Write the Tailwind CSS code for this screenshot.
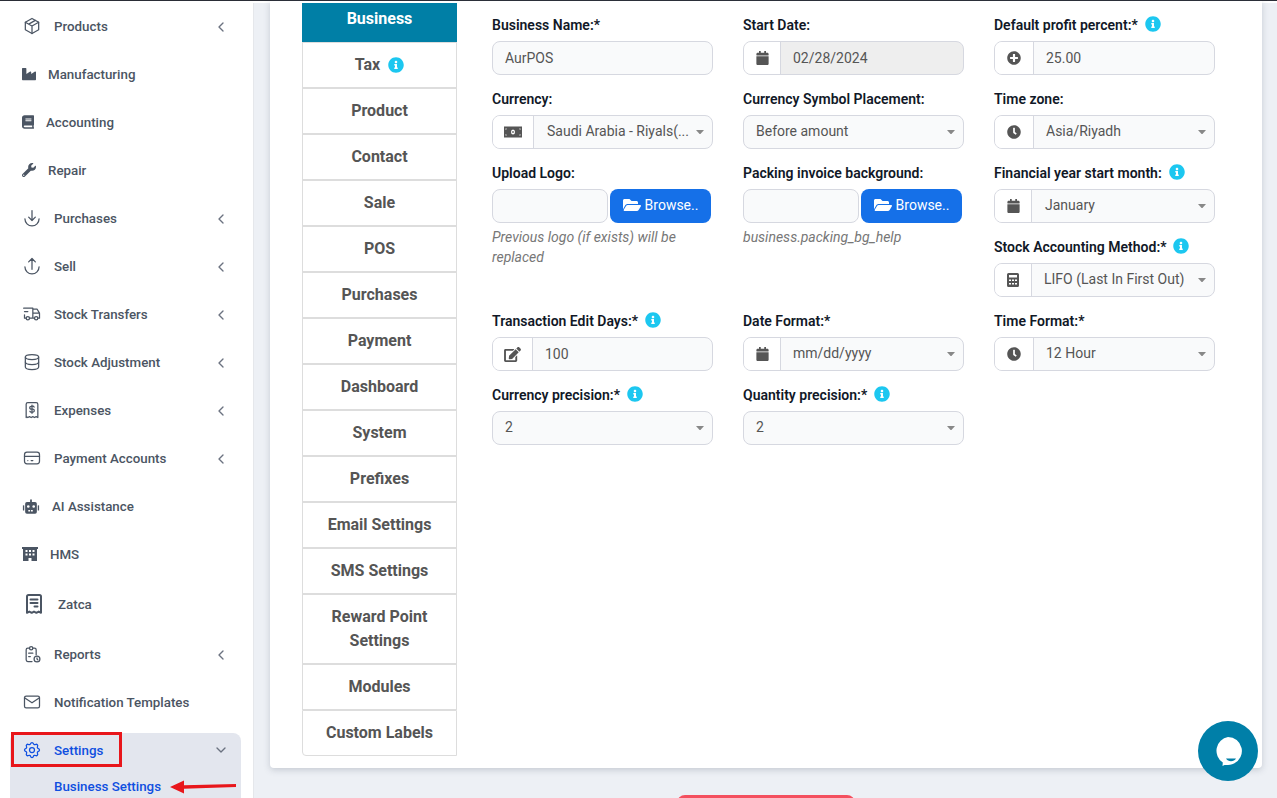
<!DOCTYPE html>
<html lang="en">
<head>
<meta charset="utf-8">
<title>Business Settings</title>
<script src="https://cdn.jsdelivr.net/npm/@tailwindcss/browser@4"></script>
</head>
<body class="font-['Roboto',sans-serif]">
<div class="relative w-[1277px] h-[798px] overflow-hidden bg-white flex flex-col">
  <div class="h-px bg-[#2a2d36] shrink-0"></div>
  <div class="flex flex-1 min-h-0">

    <!-- Sidebar -->
    <aside class="w-[254px] shrink-0 bg-white pt-px text-[13.33px] font-medium text-[#4b5563] border-r border-[#e5e7eb] [&_span]:pt-[2px]">
      <a class="flex items-center h-12 pl-[22px] pr-[24px]">
        <svg class="w-5 h-5 shrink-0" viewBox="0 0 24 24" fill="none" stroke="currentColor" stroke-width="1.5" stroke-linecap="round" stroke-linejoin="round"><path d="M12 3l8 4.500v9l-8 4.500l-8-4.500v-9z"/><path d="M12 12l8-4.500M12 12v9M12 12l-8-4.500M16 5.250l-8 4.500"/></svg>
        <span class="ml-3 flex-1">Products</span>
        <svg class="w-4 h-4 shrink-0 mt-[2px]" viewBox="0 0 24 24" fill="none" stroke="#6b7280" stroke-width="2" stroke-linecap="round" stroke-linejoin="round"><path d="M15 6l-6 6l6 6"/></svg>
      </a>
      <a class="flex items-center h-12 pl-[22px]">
        <svg class="w-[14px] h-[14px] shrink-0" viewBox="0 0 512 512" fill="currentColor"><path d="M475.115 163.781L336 252.309v-68.28c0-18.916-20.931-30.399-36.885-20.248L160 252.309V56c0-13.255-10.745-24-24-24H24C10.745 32 0 42.745 0 56v400c0 13.255 10.745 24 24 24h464c13.255 0 24-10.745 24-24V184.029c0-18.917-20.931-30.399-36.885-20.248z"/></svg>
        <span class="ml-3">Manufacturing</span>
      </a>
      <a class="flex items-center h-12 pl-[22px]">
        <svg class="w-3 h-[14px] shrink-0" viewBox="0 0 448 512" fill="currentColor"><path d="M448 360V24c0-13.3-10.7-24-24-24H96C43 0 0 43 0 96v320c0 53 43 96 96 96h328c13.3 0 24-10.7 24-24v-16c0-7.5-3.5-14.3-8.9-18.7-4.2-15.4-4.2-59.3 0-74.7 5.4-4.3 8.9-11.1 8.9-18.6zM128 134c0-3.3 2.7-6 6-6h212c3.3 0 6 2.7 6 6v20c0 3.3-2.7 6-6 6H134c-3.3 0-6-2.7-6-6v-20zm0 64c0-3.3 2.7-6 6-6h212c3.3 0 6 2.7 6 6v20c0 3.3-2.7 6-6 6H134c-3.3 0-6-2.7-6-6v-20zm253.4 250H96c-17.7 0-32-14.3-32-32 0-17.6 14.4-32 32-32h285.4c-1.9 17.1-1.9 46.9 0 64z"/></svg>
        <span class="ml-3">Accounting</span>
      </a>
      <a class="flex items-center h-12 pl-[22px]">
        <svg class="w-[14px] h-[14px] shrink-0" viewBox="0 0 512 512" fill="currentColor"><path d="M507.73 109.1c-2.24-9.03-13.54-12.09-20.12-5.51l-74.36 74.36-67.88-11.31-11.31-67.88 74.36-74.36c6.62-6.62 3.43-17.9-5.66-20.16-47.38-11.74-99.55.91-136.58 37.93-39.64 39.64-50.55 97.1-34.05 147.2L18.74 402.76c-24.99 24.99-24.99 65.51 0 90.5 24.99 24.99 65.51 24.99 90.5 0l213.21-213.21c50.12 16.71 107.47 5.68 147.37-34.22 37.07-37.07 49.7-89.32 37.91-136.73zM64 472c-13.25 0-24-10.75-24-24 0-13.26 10.75-24 24-24s24 10.74 24 24c0 13.25-10.75 24-24 24z"/></svg>
        <span class="ml-3">Repair</span>
      </a>
      <a class="flex items-center h-12 pl-[22px] pr-[24px]">
        <svg class="w-5 h-5 shrink-0" viewBox="0 0 24 24" fill="none" stroke="currentColor" stroke-width="1.5" stroke-linecap="round" stroke-linejoin="round"><path d="M3.500 13a8.500 8.500 0 0 0 17 0"/><path d="M12 3v12M8 11l4 4l4-4"/></svg>
        <span class="ml-3 flex-1">Purchases</span>
        <svg class="w-4 h-4 shrink-0 mt-[2px]" viewBox="0 0 24 24" fill="none" stroke="#6b7280" stroke-width="2" stroke-linecap="round" stroke-linejoin="round"><path d="M15 6l-6 6l6 6"/></svg>
      </a>
      <a class="flex items-center h-12 pl-[22px] pr-[24px]">
        <svg class="w-5 h-5 shrink-0" viewBox="0 0 24 24" fill="none" stroke="currentColor" stroke-width="1.5" stroke-linecap="round" stroke-linejoin="round"><path d="M3.500 13a8.500 8.500 0 0 0 17 0"/><path d="M12 16V3M8 7l4-4l4 4"/></svg>
        <span class="ml-3 flex-1">Sell</span>
        <svg class="w-4 h-4 shrink-0 mt-[2px]" viewBox="0 0 24 24" fill="none" stroke="#6b7280" stroke-width="2" stroke-linecap="round" stroke-linejoin="round"><path d="M15 6l-6 6l6 6"/></svg>
      </a>
      <a class="flex items-center h-12 pl-[22px] pr-[24px]">
        <svg class="w-5 h-5 shrink-0" viewBox="0 0 24 24" fill="none" stroke="currentColor" stroke-width="1.5" stroke-linecap="round" stroke-linejoin="round"><circle cx="7" cy="17" r="2"/><circle cx="17" cy="17" r="2"/><path d="M5 17H3v-4M2 5h11v12m-4 0h6m4 0h2v-6h-8m0-5h5l3 5M3 9h4"/></svg>
        <span class="ml-3 flex-1">Stock Transfers</span>
        <svg class="w-4 h-4 shrink-0 mt-[2px]" viewBox="0 0 24 24" fill="none" stroke="#6b7280" stroke-width="2" stroke-linecap="round" stroke-linejoin="round"><path d="M15 6l-6 6l6 6"/></svg>
      </a>
      <a class="flex items-center h-12 pl-[22px] pr-[24px]">
        <svg class="w-5 h-5 shrink-0" viewBox="0 0 24 24" fill="none" stroke="currentColor" stroke-width="1.5" stroke-linecap="round" stroke-linejoin="round"><path d="M4 6a8 3 0 1 0 16 0a8 3 0 1 0-16 0"/><path d="M4 6v6a8 3 0 0 0 16 0V6"/><path d="M4 12v6a8 3 0 0 0 16 0v-6"/></svg>
        <span class="ml-3 flex-1">Stock Adjustment</span>
        <svg class="w-4 h-4 shrink-0 mt-[2px]" viewBox="0 0 24 24" fill="none" stroke="#6b7280" stroke-width="2" stroke-linecap="round" stroke-linejoin="round"><path d="M15 6l-6 6l6 6"/></svg>
      </a>
      <a class="flex items-center h-12 pl-[22px] pr-[24px]">
        <svg class="w-5 h-5 shrink-0" viewBox="0 0 24 24" fill="none" stroke="currentColor" stroke-width="1.5" stroke-linecap="round" stroke-linejoin="round"><path d="M5 21V5a2 2 0 0 1 2-2h10a2 2 0 0 1 2 2v16l-2-1l-2 1l-2-1l-2 1l-2-1l-2 1l-2-1z"/><path d="M14.500 8.500a1.500 1.500 0 0 0-1.500-1h-2a1.500 1.500 0 0 0 0 3.500h2a1.500 1.500 0 0 1 0 3.500h-2a1.500 1.500 0 0 1-1.500-1M12 6v10"/></svg>
        <span class="ml-3 flex-1">Expenses</span>
        <svg class="w-4 h-4 shrink-0 mt-[2px]" viewBox="0 0 24 24" fill="none" stroke="#6b7280" stroke-width="2" stroke-linecap="round" stroke-linejoin="round"><path d="M15 6l-6 6l6 6"/></svg>
      </a>
      <a class="flex items-center h-12 pl-[22px] pr-[24px]">
        <svg class="w-5 h-5 shrink-0" viewBox="0 0 24 24" fill="none" stroke="currentColor" stroke-width="1.5" stroke-linecap="round" stroke-linejoin="round"><rect x="3" y="5" width="18" height="14" rx="3"/><path d="M3 10h18M7 15h.01M11 15h2"/></svg>
        <span class="ml-3 flex-1">Payment Accounts</span>
        <svg class="w-4 h-4 shrink-0 mt-[2px]" viewBox="0 0 24 24" fill="none" stroke="#6b7280" stroke-width="2" stroke-linecap="round" stroke-linejoin="round"><path d="M15 6l-6 6l6 6"/></svg>
      </a>
      <a class="flex items-center h-12 pl-[22px]">
        <svg class="w-[18px] h-[15px] shrink-0" viewBox="0 0 640 512" fill="currentColor"><path fill-rule="evenodd" d="M320 0a32 32 0 0 1 32 32v64h112a64 64 0 0 1 64 64v288a64 64 0 0 1-64 64H176a64 64 0 0 1-64-64V160a64 64 0 0 1 64-64h112V32a32 32 0 0 1 32-32zM224 208a48 48 0 1 0 0 96a48 48 0 0 0 0-96zm192 0a48 48 0 1 0 0 96a48 48 0 0 0 0-96zM224 384v48h64v-48zm96 0v48h64v-48z"/><rect x="32" y="208" width="48" height="192" rx="20"/><rect x="560" y="208" width="48" height="192" rx="20"/></svg>
        <span class="ml-3">AI Assistance</span>
      </a>
      <a class="flex items-center h-12 pl-[22px]">
        <svg class="w-4 h-[14px] shrink-0" viewBox="0 0 16 14" fill="currentColor"><path fill-rule="evenodd" d="M0 0h16v2h-1v12H9.500v-3h-3v3H1V2H0zM3.500 3v2h2V3zm3.500 0v2h2V3zm3.500 0v2h2V3zM3.500 6.500v2h2v-2zm3.500 0v2h2v-2zm3.500 0v2h2v-2z"/></svg>
        <span class="ml-3">HMS</span>
      </a>
      <a class="flex items-center h-[52px] pl-[26px]">
        <svg class="w-4 h-5 shrink-0" viewBox="0 0 16 20" fill="none" stroke="currentColor" stroke-width="2" stroke-linecap="round" stroke-linejoin="round"><path d="M1 18.800V2.500A1.500 1.500 0 0 1 2.500 1h11A1.500 1.500 0 0 1 15 2.500v16.300l-2.300-1.200l-2.300 1.200L8 17.600l-2.300 1.200l-2.400-1.200z"/><path d="M4.500 5.500h7M4.500 9h7M8.500 12.500h3"/></svg>
        <span class="ml-4">Zatca</span>
      </a>
      <a class="flex items-center h-12 pl-[22px] pr-[24px]">
        <svg class="w-5 h-5 shrink-0" viewBox="0 0 24 24" fill="none" stroke="currentColor" stroke-width="1.5" stroke-linecap="round" stroke-linejoin="round"><path d="M9 5H7a2 2 0 0 0-2 2v12a2 2 0 0 0 2 2h5M17 13V7a2 2 0 0 0-2-2h-2"/><rect x="9" y="3" width="4" height="4" rx="2"/><path d="M8 11h5M8 15h2"/><circle cx="18" cy="18" r="3.500"/><path d="M18 16.500V18l1 1"/></svg>
        <span class="ml-3 flex-1">Reports</span>
        <svg class="w-4 h-4 shrink-0 mt-[2px]" viewBox="0 0 24 24" fill="none" stroke="#6b7280" stroke-width="2" stroke-linecap="round" stroke-linejoin="round"><path d="M15 6l-6 6l6 6"/></svg>
      </a>
      <a class="flex items-center h-12 pl-[22px]">
        <svg class="w-5 h-5 shrink-0" viewBox="0 0 24 24" fill="none" stroke="currentColor" stroke-width="1.5" stroke-linecap="round" stroke-linejoin="round"><rect x="3" y="5" width="18" height="14" rx="2"/><path d="M3 7l9 6l9-6"/></svg>
        <span class="ml-3">Notification Templates</span>
      </a>
      <div class="ml-[10px] mr-3 mt-[7px] bg-[#e3e6ee] rounded-t-lg pl-3 pr-3 text-[#0f4fe0]">
        <a class="flex items-center h-[34px]">
          <svg class="w-5 h-5 shrink-0" viewBox="0 0 24 24" fill="none" stroke="currentColor" stroke-width="1.5" stroke-linecap="round" stroke-linejoin="round"><path d="M10.325 4.317c.426-1.756 2.924-1.756 3.35 0a1.724 1.724 0 0 0 2.573 1.066c1.543-.94 3.31.826 2.37 2.37a1.724 1.724 0 0 0 1.065 2.572c1.756.426 1.756 2.924 0 3.35a1.724 1.724 0 0 0-1.066 2.573c.94 1.543-.826 3.31-2.37 2.37a1.724 1.724 0 0 0-2.572 1.065c-.426 1.756-2.924 1.756-3.35 0a1.724 1.724 0 0 0-2.573-1.066c-1.543.94-3.31-.826-2.37-2.370a1.724 1.724 0 0 0-1.065-2.572c-1.756-.426-1.756-2.924 0-3.350a1.724 1.724 0 0 0 1.066-2.573c-.94-1.543.826-3.310 2.370-2.370c1 .608 2.296.07 2.572-1.065z"/><circle cx="12" cy="12" r="3"/></svg>
          <span class="ml-3 flex-1">Settings</span>
          <svg class="w-4 h-4 shrink-0" viewBox="0 0 24 24" fill="none" stroke="#6b7280" stroke-width="2" stroke-linecap="round" stroke-linejoin="round"><path d="M6 9l6 6l6-6"/></svg>
        </a>
        <a class="block pl-8 pt-[11px] h-[31px] leading-[18px]">Business Settings</a>
      </div>
    </aside>

    <!-- Main -->
    <main class="flex-1 min-w-0 flex flex-col bg-[#edf0f5]">
      <div class="h-[2px] bg-white shrink-0 ml-[-1px]"></div>
      <div class="ml-4 mr-[15px] h-[767px] shrink-0 bg-white rounded-b-[4px] shadow-[0_2px_6px_rgba(80,90,110,0.25)] flex pl-8 -mt-[2px]">

        <!-- Tabs -->
        <nav class="w-[155px] shrink-0 mt-[2px] text-base font-bold text-[#555] text-center leading-6">
          <a class="flex justify-center items-start pt-[4px] h-[39px] bg-[#007fa6] text-white">Business</a>
          <a class="flex items-center justify-center gap-2 h-[46px] border border-[#ddd]">Tax
            <svg class="w-4 h-4" viewBox="0 0 512 512" fill="#1cc7f0"><path d="M256 8C119.043 8 8 119.083 8 256c0 136.997 111.043 248 248 248s248-111.003 248-248C504 119.083 392.957 8 256 8zm0 110c23.196 0 42 18.804 42 42s-18.804 42-42 42-42-18.804-42-42 18.804-42 42-42zm56 254c0 6.627-5.373 12-12 12h-88c-6.627 0-12-5.373-12-12v-24c0-6.627 5.373-12 12-12h12v-64h-12c-6.627 0-12-5.373-12-12v-24c0-6.627 5.373-12 12-12h64c6.627 0 12 5.373 12 12v100h12c6.627 0 12 5.373 12 12v24z"/></svg>
          </a>
          <a class="flex items-center justify-center h-[46px] border border-[#ddd]">Product</a>
          <a class="flex items-center justify-center h-[46px] border border-[#ddd]">Contact</a>
          <a class="flex items-center justify-center h-[46px] border border-[#ddd]">Sale</a>
          <a class="flex items-center justify-center h-[46px] border border-[#ddd]">POS</a>
          <a class="flex items-center justify-center h-[46px] border border-[#ddd]">Purchases</a>
          <a class="flex items-center justify-center h-[46px] border border-[#ddd]">Payment</a>
          <a class="flex items-center justify-center h-[46px] border border-[#ddd]">Dashboard</a>
          <a class="flex items-center justify-center h-[46px] border border-[#ddd]">System</a>
          <a class="flex items-center justify-center h-[46px] border border-[#ddd]">Prefixes</a>
          <a class="flex items-center justify-center h-[46px] border border-[#ddd]">Email Settings</a>
          <a class="flex items-center justify-center h-[46px] border border-[#ddd]">SMS Settings</a>
          <a class="flex items-center justify-center h-[70px] border border-[#ddd] px-6">Reward Point Settings</a>
          <a class="flex items-center justify-center h-[46px] border border-[#ddd]">Modules</a>
          <a class="flex items-center justify-center h-[46px] border border-[#ddd] rounded-bl-[4px]">Custom Labels</a>
        </nav>

        <!-- Form -->
        <div class="flex gap-[30px] ml-[35px] pt-4 text-sm text-[#555]">

          <!-- Column 1 -->
          <div class="w-[221px] flex flex-col gap-4">
            <div>
              <label class="block h-4 leading-4 mb-2 font-semibold text-[#111827]">Business Name:*</label>
              <div class="h-[34px] flex items-center px-[12px] rounded-lg border border-[#d6d8e0] bg-[#f9fafb]">AurPOS</div>
            </div>
            <div>
              <label class="block h-4 leading-4 mb-2 font-semibold text-[#111827]">Currency:</label>
              <div class="h-[34px] flex rounded-lg border border-[#d6d8e0] bg-[#f9fafb] overflow-hidden">
                <span class="w-[41px] shrink-0 flex items-center justify-center bg-white border-r border-[#d6d8e0]">
                  <svg class="w-[18px] h-3" viewBox="0 0 18 12" fill="#555"><path fill-rule="evenodd" d="M0 .5h18v11H0zM9 3.500a2 2.500 0 1 0 0 5a2 2.500 0 0 0 0-5zM9 5a.8 1 0 1 1 0 2a.8 1 0 0 1 0-2zM1.500 2.500v1.200A1.200 1.200 0 0 0 2.700 2.500zm13.800 0A1.200 1.200 0 0 0 16.500 3.700V2.500zM1.500 8.300v1.200h1.200A1.200 1.200 0 0 0 1.500 8.300zM16.500 8.300A1.200 1.200 0 0 0 15.300 9.500h1.200z"/></svg>
                </span>
                <span class="flex-1 min-w-0 flex items-center pl-[13px] pr-[8px]">
                  <span class="flex-1 whitespace-nowrap pb-[2px]">Saudi Arabia - Riyals(...</span>
                  <svg class="w-2 h-1 shrink-0" viewBox="0 0 8 4" fill="#888"><path d="M0 0h8L4 4.500z"/></svg>
                </span>
              </div>
            </div>
            <div class="h-[132px]">
              <label class="block h-4 leading-4 mb-2 font-semibold text-[#111827]">Upload Logo:</label>
              <div class="h-[34px] flex gap-[2px]">
                <div class="w-[116px] rounded-lg border border-[#d6d8e0] bg-[#f9fafb]"></div>
                <div class="w-[101px] rounded-lg bg-[#1570e8] text-white flex items-center justify-center gap-[4px] pb-[2px]">
                  <svg class="w-[18px] h-4" viewBox="0 0 576 512" fill="currentColor"><path d="M572.694 292.093L500.27 416.248A63.997 63.997 0 0 1 444.989 448H45.025c-18.523 0-30.064-20.093-20.731-36.093l72.424-124.155A64 64 0 0 1 152 256h399.964c18.523 0 30.064 20.093 20.73 36.093zM152 224h328v-48c0-26.51-21.49-48-48-48H272l-64-64H48C21.49 64 0 85.49 0 112v278.046l69.077-118.418C86.214 242.25 117.989 224 152 224z"/></svg>
                  Browse..
                </div>
              </div>
              <p class="mt-[4px] italic text-[#777] leading-5">Previous logo (if exists) will be replaced</p>
            </div>
            <div>
              <label class="flex items-center gap-[7px] h-4 leading-4 mb-2 font-semibold text-[#111827]">Transaction Edit Days:*
                <svg class="w-4 h-4 -mt-[2px]" viewBox="0 0 512 512" fill="#1cc7f0"><path d="M256 8C119.043 8 8 119.083 8 256c0 136.997 111.043 248 248 248s248-111.003 248-248C504 119.083 392.957 8 256 8zm0 110c23.196 0 42 18.804 42 42s-18.804 42-42 42-42-18.804-42-42 18.804-42 42-42zm56 254c0 6.627-5.373 12-12 12h-88c-6.627 0-12-5.373-12-12v-24c0-6.627 5.373-12 12-12h12v-64h-12c-6.627 0-12-5.373-12-12v-24c0-6.627 5.373-12 12-12h64c6.627 0 12 5.373 12 12v100h12c6.627 0 12 5.373 12 12v24z"/></svg>
              </label>
              <div class="h-[34px] flex rounded-lg border border-[#d6d8e0] bg-[#f9fafb] overflow-hidden">
                <span class="w-[40px] shrink-0 flex items-center justify-center bg-white border-r border-[#d6d8e0]">
                  <svg class="w-[17px] h-[15px]" viewBox="0 0 576 512" fill="#555"><path d="M402.6 83.2l90.2 90.2c3.8 3.8 3.8 10 0 13.8L274.4 405.6l-92.8 10.3c-12.4 1.4-22.9-9.1-21.5-21.5l10.3-92.8L388.8 83.2c3.8-3.8 10-3.8 13.8 0zm162-22.9l-48.8-48.8c-15.2-15.2-39.9-15.2-55.2 0l-35.4 35.4c-3.8 3.8-3.8 10 0 13.8l90.2 90.2c3.8 3.8 10 3.8 13.8 0l35.400-35.400c15.200-15.300 15.200-40 0-55.200zM384 346.200V448H64V128h229.800c3.200 0 6.200-1.300 8.500-3.500l40-40c7.600-7.600 2.200-20.500-8.500-20.500H48C21.500 64 0 85.500 0 112v352c0 26.500 21.500 48 48 48h352c26.500 0 48-21.500 48-48V306.200c0-10.700-12.900-16-20.500-8.500l-40 40c-2.200 2.300-3.500 5.300-3.500 8.500z"/></svg>
                </span>
                <span class="flex-1 flex items-center pl-[12px]">100</span>
              </div>
            </div>
            <div>
              <label class="flex items-center gap-[7px] h-4 leading-4 mb-2 font-semibold text-[#111827]">Currency precision:*
                <svg class="w-4 h-4 -mt-[2px]" viewBox="0 0 512 512" fill="#1cc7f0"><path d="M256 8C119.043 8 8 119.083 8 256c0 136.997 111.043 248 248 248s248-111.003 248-248C504 119.083 392.957 8 256 8zm0 110c23.196 0 42 18.804 42 42s-18.804 42-42 42-42-18.804-42-42 18.804-42 42-42zm56 254c0 6.627-5.373 12-12 12h-88c-6.627 0-12-5.373-12-12v-24c0-6.627 5.373-12 12-12h12v-64h-12c-6.627 0-12-5.373-12-12v-24c0-6.627 5.373-12 12-12h64c6.627 0 12 5.373 12 12v100h12c6.627 0 12 5.373 12 12v24z"/></svg>
              </label>
              <div class="h-[34px] flex items-center pl-[12px] pr-[8px] rounded-lg border border-[#d6d8e0] bg-[#f9fafb]">
                <span class="flex-1 pb-[2px]">2</span>
                <svg class="w-2 h-1 shrink-0" viewBox="0 0 8 4" fill="#888"><path d="M0 0h8L4 4.500z"/></svg>
              </div>
            </div>
          </div>

          <!-- Column 2 -->
          <div class="w-[221px] flex flex-col gap-4">
            <div>
              <label class="block h-4 leading-4 mb-2 font-semibold text-[#111827]">Start Date:</label>
              <div class="h-[34px] flex rounded-lg border border-[#d6d8e0] bg-[#eeeeee] overflow-hidden">
                <span class="w-[37px] shrink-0 flex items-center justify-center bg-white border-r border-[#d6d8e0]">
                  <svg class="w-[13px] h-[14px]" viewBox="0 0 448 512" fill="#555"><path d="M12 192h424c6.600 0 12 5.400 12 12v260c0 26.500-21.500 48-48 48H48c-26.500 0-48-21.500-48-48V204c0-6.600 5.400-12 12-12zm436-44v-36c0-26.500-21.500-48-48-48h-48V12c0-6.600-5.400-12-12-12h-40c-6.600 0-12 5.400-12 12v52H160V12c0-6.600-5.400-12-12-12h-40c-6.600 0-12 5.400-12 12v52H48C21.500 64 0 85.500 0 112v36c0 6.600 5.400 12 12 12h424c6.600 0 12-5.400 12-12z"/></svg>
                </span>
                <span class="flex-1 flex items-center pl-[12px]">02/28/2024</span>
              </div>
            </div>
            <div>
              <label class="block h-4 leading-4 mb-2 font-semibold text-[#111827]">Currency Symbol Placement:</label>
              <div class="h-[34px] flex items-center pl-[12px] pr-[8px] rounded-lg border border-[#d6d8e0] bg-[#f9fafb]">
                <span class="flex-1 pb-[2px]">Before amount</span>
                <svg class="w-2 h-1 shrink-0" viewBox="0 0 8 4" fill="#888"><path d="M0 0h8L4 4.500z"/></svg>
              </div>
            </div>
            <div class="h-[132px]">
              <label class="block h-4 leading-4 mb-2 font-semibold text-[#111827]">Packing invoice background:</label>
              <div class="h-[34px] flex gap-[2px]">
                <div class="w-[116px] rounded-lg border border-[#d6d8e0] bg-[#f9fafb]"></div>
                <div class="w-[101px] rounded-lg bg-[#1570e8] text-white flex items-center justify-center gap-[4px] pb-[2px]">
                  <svg class="w-[18px] h-4" viewBox="0 0 576 512" fill="currentColor"><path d="M572.694 292.093L500.27 416.248A63.997 63.997 0 0 1 444.989 448H45.025c-18.523 0-30.064-20.093-20.731-36.093l72.424-124.155A64 64 0 0 1 152 256h399.964c18.523 0 30.064 20.093 20.730 36.093zM152 224h328v-48c0-26.510-21.490-48-48-48H272l-64-64H48C21.490 64 0 85.490 0 112v278.046l69.077-118.418C86.214 242.250 117.989 224 152 224z"/></svg>
                  Browse..
                </div>
              </div>
              <p class="mt-[4px] italic text-[#777] leading-5">business.packing_bg_help</p>
            </div>
            <div>
              <label class="block h-4 leading-4 mb-2 font-semibold text-[#111827]">Date Format:*</label>
              <div class="h-[34px] flex rounded-lg border border-[#d6d8e0] bg-[#f9fafb] overflow-hidden">
                <span class="w-[37px] shrink-0 flex items-center justify-center bg-white border-r border-[#d6d8e0]">
                  <svg class="w-[13px] h-[14px]" viewBox="0 0 448 512" fill="#555"><path d="M12 192h424c6.600 0 12 5.400 12 12v260c0 26.500-21.500 48-48 48H48c-26.500 0-48-21.500-48-48V204c0-6.600 5.400-12 12-12zm436-44v-36c0-26.500-21.500-48-48-48h-48V12c0-6.600-5.400-12-12-12h-40c-6.600 0-12 5.400-12 12v52H160V12c0-6.600-5.400-12-12-12h-40c-6.600 0-12 5.400-12 12v52H48C21.500 64 0 85.500 0 112v36c0 6.600 5.400 12 12 12h424c6.600 0 12-5.400 12-12z"/></svg>
                </span>
                <span class="flex-1 flex items-center pl-[12px] pr-[8px]">
                  <span class="flex-1 pb-[2px]">mm/dd/yyyy</span>
                  <svg class="w-2 h-1 shrink-0" viewBox="0 0 8 4" fill="#888"><path d="M0 0h8L4 4.500z"/></svg>
                </span>
              </div>
            </div>
            <div>
              <label class="flex items-center gap-[7px] h-4 leading-4 mb-2 font-semibold text-[#111827]">Quantity precision:*
                <svg class="w-4 h-4 -mt-[2px]" viewBox="0 0 512 512" fill="#1cc7f0"><path d="M256 8C119.043 8 8 119.083 8 256c0 136.997 111.043 248 248 248s248-111.003 248-248C504 119.083 392.957 8 256 8zm0 110c23.196 0 42 18.804 42 42s-18.804 42-42 42-42-18.804-42-42 18.804-42 42-42zm56 254c0 6.627-5.373 12-12 12h-88c-6.627 0-12-5.373-12-12v-24c0-6.627 5.373-12 12-12h12v-64h-12c-6.627 0-12-5.373-12-12v-24c0-6.627 5.373-12 12-12h64c6.627 0 12 5.373 12 12v100h12c6.627 0 12 5.373 12 12v24z"/></svg>
              </label>
              <div class="h-[34px] flex items-center pl-[12px] pr-[8px] rounded-lg border border-[#d6d8e0] bg-[#f9fafb]">
                <span class="flex-1 pb-[2px]">2</span>
                <svg class="w-2 h-1 shrink-0" viewBox="0 0 8 4" fill="#888"><path d="M0 0h8L4 4.500z"/></svg>
              </div>
            </div>
          </div>

          <!-- Column 3 -->
          <div class="w-[221px] flex flex-col gap-4">
            <div>
              <label class="flex items-center gap-[7px] h-4 leading-4 mb-2 font-semibold text-[#111827]">Default profit percent:*
                <svg class="w-4 h-4 -mt-[2px]" viewBox="0 0 512 512" fill="#1cc7f0"><path d="M256 8C119.043 8 8 119.083 8 256c0 136.997 111.043 248 248 248s248-111.003 248-248C504 119.083 392.957 8 256 8zm0 110c23.196 0 42 18.804 42 42s-18.804 42-42 42-42-18.804-42-42 18.804-42 42-42zm56 254c0 6.627-5.373 12-12 12h-88c-6.627 0-12-5.373-12-12v-24c0-6.627 5.373-12 12-12h12v-64h-12c-6.627 0-12-5.373-12-12v-24c0-6.627 5.373-12 12-12h64c6.627 0 12 5.373 12 12v100h12c6.627 0 12 5.373 12 12v24z"/></svg>
              </label>
              <div class="h-[34px] flex rounded-lg border border-[#d6d8e0] bg-[#f9fafb] overflow-hidden">
                <span class="w-[39px] shrink-0 flex items-center justify-center bg-white border-r border-[#d6d8e0]">
                  <svg class="w-[14px] h-[14px]" viewBox="0 0 512 512" fill="#555"><path d="M256 8C119 8 8 119 8 256s111 248 248 248 248-111 248-248S393 8 256 8zm144 276c0 6.600-5.400 12-12 12h-92v92c0 6.600-5.400 12-12 12h-56c-6.600 0-12-5.400-12-12v-92h-92c-6.600 0-12-5.400-12-12v-56c0-6.600 5.400-12 12-12h92v-92c0-6.600 5.400-12 12-12h56c6.600 0 12 5.400 12 12v92h92c6.600 0 12 5.400 12 12v56z"/></svg>
                </span>
                <span class="flex-1 flex items-center pl-[12px]">25.00</span>
              </div>
            </div>
            <div>
              <label class="block h-4 leading-4 mb-2 font-semibold text-[#111827]">Time zone:</label>
              <div class="h-[34px] flex rounded-lg border border-[#d6d8e0] bg-[#f9fafb] overflow-hidden">
                <span class="w-[39px] shrink-0 flex items-center justify-center bg-white border-r border-[#d6d8e0]">
                  <svg class="w-[14px] h-[14px]" viewBox="0 0 512 512" fill="#555"><path d="M256,8C119,8,8,119,8,256S119,504,256,504,504,393,504,256,393,8,256,8Zm92.49,313h0l-20,25a16,16,0,0,1-22.49,2.5h0l-67-49.72a40,40,0,0,1-15-31.23V112a16,16,0,0,1,16-16h32a16,16,0,0,1,16,16V256l58,42.5A16,16,0,0,1,348.49,321Z"/></svg>
                </span>
                <span class="flex-1 flex items-center pl-[12px] pr-[8px]">
                  <span class="flex-1 pb-[2px]">Asia/Riyadh</span>
                  <svg class="w-2 h-1 shrink-0" viewBox="0 0 8 4" fill="#888"><path d="M0 0h8L4 4.500z"/></svg>
                </span>
              </div>
            </div>
            <div>
              <label class="flex items-center gap-[7px] h-4 leading-4 mb-2 font-semibold text-[#111827]">Financial year start month:
                <svg class="w-4 h-4 -mt-[2px]" viewBox="0 0 512 512" fill="#1cc7f0"><path d="M256 8C119.043 8 8 119.083 8 256c0 136.997 111.043 248 248 248s248-111.003 248-248C504 119.083 392.957 8 256 8zm0 110c23.196 0 42 18.804 42 42s-18.804 42-42 42-42-18.804-42-42 18.804-42 42-42zm56 254c0 6.627-5.373 12-12 12h-88c-6.627 0-12-5.373-12-12v-24c0-6.627 5.373-12 12-12h12v-64h-12c-6.627 0-12-5.373-12-12v-24c0-6.627 5.373-12 12-12h64c6.627 0 12 5.373 12 12v100h12c6.627 0 12 5.373 12 12v24z"/></svg>
              </label>
              <div class="h-[34px] flex rounded-lg border border-[#d6d8e0] bg-[#f9fafb] overflow-hidden">
                <span class="w-[37px] shrink-0 flex items-center justify-center bg-white border-r border-[#d6d8e0]">
                  <svg class="w-[13px] h-[14px]" viewBox="0 0 448 512" fill="#555"><path d="M12 192h424c6.600 0 12 5.400 12 12v260c0 26.500-21.500 48-48 48H48c-26.500 0-48-21.500-48-48V204c0-6.600 5.400-12 12-12zm436-44v-36c0-26.500-21.500-48-48-48h-48V12c0-6.600-5.400-12-12-12h-40c-6.600 0-12 5.400-12 12v52H160V12c0-6.600-5.400-12-12-12h-40c-6.600 0-12 5.400-12 12v52H48C21.500 64 0 85.500 0 112v36c0 6.600 5.400 12 12 12h424c6.600 0 12-5.400 12-12z"/></svg>
                </span>
                <span class="flex-1 flex items-center pl-[13px] pr-[8px]">
                  <span class="flex-1 pb-[2px]">January</span>
                  <svg class="w-2 h-1 shrink-0" viewBox="0 0 8 4" fill="#888"><path d="M0 0h8L4 4.500z"/></svg>
                </span>
              </div>
            </div>
            <div>
              <label class="flex items-center gap-[7px] h-4 leading-4 mb-2 font-semibold text-[#111827]">Stock Accounting Method:*
                <svg class="w-4 h-4 -mt-[2px]" viewBox="0 0 512 512" fill="#1cc7f0"><path d="M256 8C119.043 8 8 119.083 8 256c0 136.997 111.043 248 248 248s248-111.003 248-248C504 119.083 392.957 8 256 8zm0 110c23.196 0 42 18.804 42 42s-18.804 42-42 42-42-18.804-42-42 18.804-42 42-42zm56 254c0 6.627-5.373 12-12 12h-88c-6.627 0-12-5.373-12-12v-24c0-6.627 5.373-12 12-12h12v-64h-12c-6.627 0-12-5.373-12-12v-24c0-6.627 5.373-12 12-12h64c6.627 0 12 5.373 12 12v100h12c6.627 0 12 5.373 12 12v24z"/></svg>
              </label>
              <div class="h-[34px] flex rounded-lg border border-[#d6d8e0] bg-[#f9fafb] overflow-hidden">
                <span class="w-[37px] shrink-0 flex items-center justify-center bg-white border-r border-[#d6d8e0]">
                  <svg class="w-3 h-[14px]" viewBox="0 0 12 14" fill="#555"><path fill-rule="evenodd" d="M1.500 0h9A1.500 1.500 0 0 1 12 1.500v11a1.500 1.500 0 0 1-1.500 1.500h-9A1.500 1.500 0 0 1 0 12.500v-11A1.500 1.500 0 0 1 1.500 0zM2 2v2.500h8V2zM2 6.500V8h2V6.500zm3 0V8h2V6.500zm3 0V8h2V6.500zM2 10v1.500h2V10zm3 0v1.500h2V10zm3 0v1.500h2V10z"/></svg>
                </span>
                <span class="flex-1 flex items-center pl-[12px] pr-[8px]">
                  <span class="flex-1 whitespace-nowrap pb-[2px]">LIFO (Last In First Out)</span>
                  <svg class="w-2 h-1 shrink-0" viewBox="0 0 8 4" fill="#888"><path d="M0 0h8L4 4.500z"/></svg>
                </span>
              </div>
            </div>
            <div>
              <label class="block h-4 leading-4 mb-2 font-semibold text-[#111827]">Time Format:*</label>
              <div class="h-[34px] flex rounded-lg border border-[#d6d8e0] bg-[#f9fafb] overflow-hidden">
                <span class="w-[39px] shrink-0 flex items-center justify-center bg-white border-r border-[#d6d8e0]">
                  <svg class="w-[14px] h-[14px]" viewBox="0 0 512 512" fill="#555"><path d="M256,8C119,8,8,119,8,256S119,504,256,504,504,393,504,256,393,8,256,8Zm92.49,313h0l-20,25a16,16,0,0,1-22.49,2.5h0l-67-49.72a40,40,0,0,1-15-31.23V112a16,16,0,0,1,16-16h32a16,16,0,0,1,16,16V256l58,42.5A16,16,0,0,1,348.49,321Z"/></svg>
                </span>
                <span class="flex-1 flex items-center pl-[12px] pr-[8px]">
                  <span class="flex-1 pb-[2px]">12 Hour</span>
                  <svg class="w-2 h-1 shrink-0" viewBox="0 0 8 4" fill="#888"><path d="M0 0h8L4 4.500z"/></svg>
                </span>
              </div>
            </div>
          </div>
        </div>
      </div>

      <!-- Save button peeking in at the fold -->
      <div class="flex justify-center mt-[27px]">
        <div class="w-[178px] h-10 rounded-lg bg-[#f4505f]"></div>
      </div>
    </main>
  </div>

  <!-- Annotations -->
  <div class="absolute left-[11px] top-[732px] w-[111px] h-[35px] border-[3px] border-[#e8161b]"></div>
  <svg class="absolute left-[168px] top-[778px] w-[70px] h-[18px]" viewBox="0 0 70 18" fill="#e8161b"><path d="M2 9L16 2.500v4.700L68 6v3L16 10.700V15.500z"/></svg>

  <!-- Chat widget -->
  <div class="absolute left-[1198px] top-[721px] w-[60px] h-[60px] rounded-full bg-[#007fa8] flex items-center justify-center">
    <svg class="w-[30px] h-[32px]" viewBox="0 0 30 32"><path fill="#fff" d="M15 2a14 14 0 0 1 6 26.600c-3 1.400-7 1.600-9.500 1.400L9.500 31l.3-3.500A14 14 0 0 1 15 2z"/><path fill="#007fa8" d="M13 23.500h10c-1 1.800-3 2.700-5 2.700s-4-.9-5-2.700z"/></svg>
  </div>
</div>
</body>
</html>
